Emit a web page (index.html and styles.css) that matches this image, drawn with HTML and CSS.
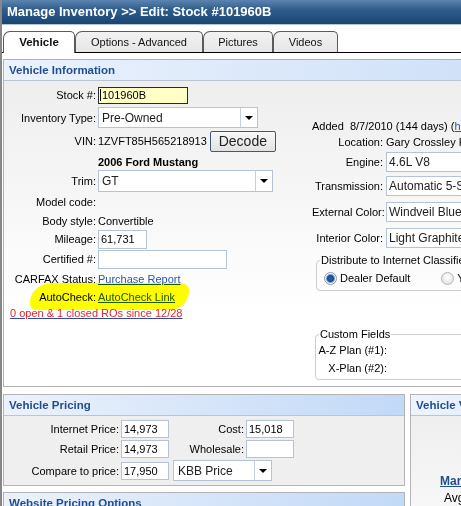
FILE: index.html
```html
<!DOCTYPE html>
<html>
<head>
<meta charset="utf-8">
<title>Manage Inventory</title>
<link rel="stylesheet" href="styles.css">
</head>
<body>
<div class="window">
  <div class="titlebar">Manage Inventory &gt;&gt; Edit: Stock #101960B</div>
  <div class="tabbar">
    <div class="tab tab-vehicle active">Vehicle</div>
    <div class="tab tab-options">Options - Advanced</div>
    <div class="tab tab-pictures">Pictures</div>
    <div class="tab tab-videos">Videos</div>
  </div>
  <div class="content">
    <section class="panel info">
      <div class="panel-head info-head">Vehicle Information</div>
      <div class="info-body">
        <div class="info-left">
          <div class="lbl">Stock #:</div>
          <div class="val"><span class="box stock"><span class="caret"></span>101960B</span></div>

          <div class="lbl">Inventory Type:</div>
          <div class="val"><span class="box select inv-type"><span class="sel-text">Pre-Owned</span><span class="sel-arrow"></span></span></div>

          <div class="lbl">VIN:</div>
          <div class="val"><span>1ZVFT85H565218913</span><span class="btn">Decode</span></div>

          <div class="lbl"></div>
          <div class="val ymm">2006 Ford Mustang</div>

          <div class="lbl">Trim:</div>
          <div class="val"><span class="box select trim"><span class="sel-text">GT</span><span class="sel-arrow"></span></span></div>

          <div class="lbl">Model code:</div>
          <div class="val"></div>

          <div class="lbl">Body style:</div>
          <div class="val">Convertible</div>

          <div class="lbl">Mileage:</div>
          <div class="val"><span class="box mileage">61,731</span></div>

          <div class="lbl">Certified #:</div>
          <div class="val"><span class="box certified"></span></div>

          <div class="lbl">CARFAX Status:</div>
          <div class="val"><a class="link">Purchase Report</a></div>

          <div class="lbl">AutoCheck:</div>
          <div class="val"><a class="link">AutoCheck Link</a></div>

          <div class="ros"><a class="ros-link">0 open &amp; 1 closed ROs since 12/28</a></div>

          <div class="highlight"></div>
        </div>

        <div class="info-right">
          <div class="facts">
            <div class="added">Added&nbsp; 8/7/2010 (144 days) (<a class="link">history</a>)</div>
            <div class="lbl">Location:</div>
            <div class="val">Gary Crossley Ford</div>
            <div class="lbl">Engine:</div>
            <div class="val"><span class="box wide">4.6L V8</span></div>
            <div class="lbl">Transmission:</div>
            <div class="val"><span class="box wide">Automatic 5-Speed</span></div>
            <div class="lbl">External Color:</div>
            <div class="val"><span class="box wide">Windveil Blue Metallic</span></div>
            <div class="lbl">Interior Color:</div>
            <div class="val"><span class="box wide">Light Graphite</span></div>
          </div>

          <fieldset class="group distribute">
            <legend>Distribute to Internet Classifieds</legend>
            <div class="radios">
              <span class="radio checked"></span><span class="radio-label">Dealer Default</span>
              <span class="radio second"></span><span class="radio-label">Yes</span>
            </div>
          </fieldset>

          <fieldset class="group custom">
            <legend>Custom Fields</legend>
            <div class="custom-grid">
              <div class="lbl">A-Z Plan (#1):</div><div class="val"></div>
              <div class="lbl">X-Plan (#2):</div><div class="val"></div>
            </div>
          </fieldset>
        </div>
      </div>
    </section>

    <div class="lower">
      <div class="lower-left">
        <section class="panel pricing">
          <div class="panel-head">Vehicle Pricing</div>
          <div class="pricing-body">
            <div class="lbl">Internet Price:</div>
            <div><span class="box price">14,973</span></div>
            <div class="lbl">Cost:</div>
            <div><span class="box price">15,018</span></div>

            <div class="lbl">Retail Price:</div>
            <div><span class="box price">14,973</span></div>
            <div class="lbl">Wholesale:</div>
            <div><span class="box price"></span></div>

            <div class="lbl">Compare to price:</div>
            <div><span class="box price">17,950</span></div>
            <div class="kbb-cell"><span class="box select kbb"><span class="sel-text">KBB Price</span><span class="sel-arrow"></span></span></div>
          </div>
        </section>
        <section class="panel website">
          <div class="panel-head">Website Pricing Options</div>
        </section>
      </div>
      <section class="panel vvalue">
        <div class="panel-head vvalue-head">Vehicle Values</div>
        <div class="vvalue-body">
          <a class="market">Market Value</a>
          <div class="avg">Avg. Market Price</div>
        </div>
      </section>
    </div>
  </div>
</div>
</body>
</html>
```

FILE: styles.css
```css
html, body {
  margin: 0;
  padding: 0;
  overflow: hidden;
}

body {
  width: 461px;
  height: 506px;
  background: #ffffff;
  font-family: "Liberation Sans", Arial, sans-serif;
  font-size: 11px;
  color: #000;
}

.window {
  box-sizing: border-box;
  height: 506px;
  border-left: 2px solid #878787;
}

/* Title bar */
.titlebar {
  box-sizing: border-box;
  height: 25px;
  padding-left: 5px;
  background: linear-gradient(#5d84b0 0%, #2f5c8c 40%, #184571 100%);
  border-bottom: 1px solid #b9c4cf;
  color: #fff;
  font-weight: bold;
  font-size: 13px;
  line-height: 24px;
  white-space: nowrap;
}

/* Tabs */
.tabbar {
  display: flex;
  align-items: flex-end;
  height: 21px;
  padding: 6px 0 0 1px;
  border-bottom: 1px solid #000;
}

.tab {
  box-sizing: border-box;
  flex-shrink: 0;
  height: 21px;
  border: 1px solid #5a5a5a;
  border-bottom: none;
  border-radius: 7px 5px 0 0;
  background: linear-gradient(#f2f2f2, #e6e6e6);
  color: #111;
  font-size: 11px;
  line-height: 20px;
  text-align: center;
  white-space: nowrap;
}

.tab.active {
  height: 22px;
  margin-bottom: -1px;
  background: #fff;
  font-weight: bold;
  font-size: 11.5px;
  line-height: 21px;
  position: relative;
}

.tab-vehicle { width: 72px; }
.tab-options { width: 128px; }
.tab-pictures { width: 70px; }
.tab-videos { width: 65px; }

/* Content */
.content {
  padding: 6px 0 0 1px;
}

.panel {
  box-sizing: border-box;
  border: 1px solid #b3b3b3;
  background: #fff;
}

.panel-head {
  box-sizing: border-box;
  height: 21px;
  padding-left: 5px;
  background: linear-gradient(to right, #ebf2fc, #c2d9f7);
  border-bottom: 1px solid #b9c5d3;
  color: #1f4e8f;
  font-weight: bold;
  font-size: 11.5px;
  line-height: 20px;
  white-space: nowrap;
}

.info {
  width: 700px;
}

.info-body {
  display: flex;
  height: 305px;
  background: linear-gradient(#eeeeee, #ffffff 230px);
}

.lbl {
  text-align: right;
  white-space: nowrap;
}

.val {
  display: flex;
  align-items: center;
  white-space: nowrap;
}

/* left column */
.info-left {
  position: relative;
  flex-shrink: 0;
  display: grid;
  grid-template-columns: 92px 1fr;
  grid-template-rows: 22px 23px 24px 17px 22px 20px 17px 20px 20px 19px 18px 14px;
  column-gap: 2px;
  align-items: center;
  align-content: start;
  width: 308px;
  padding-top: 3px;
}

.box {
  box-sizing: border-box;
  display: flex;
  align-items: center;
  border: 1px solid #b6c3d2;
  background: #fff;
  padding-left: 2px;
  white-space: nowrap;
  overflow: hidden;
}

.stock {
  width: 90px;
  height: 17px;
  background: #ffffc6;
  border-color: #2a2a2a;
  padding-left: 1px;
}

.caret {
  width: 1px;
  height: 12px;
  margin-right: 1px;
  background: #000;
}

.select {
  position: relative;
  font-size: 12px;
  color: #222;
  padding-left: 3px;
}

.sel-text {
  flex: 1;
}

.sel-arrow {
  box-sizing: border-box;
  align-self: stretch;
  width: 17px;
  border-left: 1px solid #c6cfda;
  position: relative;
}

.sel-arrow::after {
  content: "";
  position: absolute;
  left: 4px;
  top: 50%;
  margin-top: -2px;
  border-left: 4px solid transparent;
  border-right: 4px solid transparent;
  border-top: 4px solid #000;
}

.inv-type {
  width: 160px;
  height: 21px;
}

.trim {
  width: 175px;
  height: 22px;
}

.btn {
  box-sizing: border-box;
  width: 66px;
  height: 21px;
  margin-left: 3px;
  border: 1px solid #38598a;
  border-radius: 2px;
  background: linear-gradient(#f8f8f8, #e2e2e2);
  color: #222;
  font-size: 14px;
  line-height: 19px;
  text-align: center;
}

.ymm {
  font-weight: bold;
}

.mileage {
  width: 49px;
  height: 19px;
}

.certified {
  width: 129px;
  height: 19px;
}

.link {
  color: #2458a6;
  text-decoration: underline;
}

.ros {
  grid-column: 1 / -1;
  padding-left: 6px;
  white-space: nowrap;
}

.ros-link {
  color: #e3252d;
  text-decoration: underline;
  text-decoration-color: #2a4c9c;
}

.highlight {
  position: absolute;
  left: 27px;
  top: 202px;
  width: 157px;
  height: 27px;
  background: #ffff00;
  border-radius: 16px 12px 13px 10px / 14px 12px 13px 12px;
  transform: skewX(-18deg);
  mix-blend-mode: multiply;
  pointer-events: none;
}

/* right column */
.info-right {
  display: flex;
  flex-direction: column;
  flex-shrink: 0;
  width: 300px;
}

.facts {
  display: grid;
  grid-template-columns: 71px 1fr;
  grid-template-rows: 17px 16px 23px 26px 26px 26px;
  column-gap: 3px;
  align-items: center;
  margin-top: 36px;
}

.added {
  grid-column: 1 / -1;
  white-space: nowrap;
}

.wide {
  width: 160px;
  height: 20px;
  font-size: 12px;
  color: #222;
}

.group {
  box-sizing: border-box;
  width: 220px;
  margin: 0;
  border: 1px solid #cdcdcd;
  border-radius: 4px;
  min-inline-size: 0;
}

.group legend {
  padding: 0 1px;
  font-size: 11px;
  line-height: 13px;
  white-space: nowrap;
}

.distribute {
  margin: 3px 0 0 4px;
  padding: 0 0 4px 3px;
}

.radios {
  display: flex;
  align-items: center;
  height: 16px;
  margin-top: 3px;
  white-space: nowrap;
}

.radio {
  box-sizing: border-box;
  width: 13px;
  height: 13px;
  margin-left: 4px;
  border: 1px solid #8d9aa8;
  border-radius: 50%;
  background: radial-gradient(circle at 50% 40%, #ffffff, #dcdcdc);
}

.radio.checked {
  background: radial-gradient(circle at 50% 50%, #2a64ad 0, #1b4d8f 3px, #6f9fd6 4px, #ffffff 5px, #e2e2e2 6px);
}

.radio.second {
  margin-left: 31px;
  border-color: #b5b5b5;
}

.radio-label {
  margin-left: 3px;
}

.custom {
  margin: 37px 0 0 3px;
  padding: 0 0 2px 0;
}

.custom legend {
  margin-left: 3px;
}

.custom-grid {
  display: grid;
  grid-template-columns: 71px 1fr;
  grid-template-rows: 18px 18px;
  align-items: center;
}

/* lower area */
.lower {
  display: flex;
  align-items: flex-start;
  margin-top: 7px;
}

.lower-left {
  flex-shrink: 0;
  width: 402px;
}

.pricing-body {
  display: grid;
  grid-template-columns: 115px 48px 73px 48px;
  grid-template-rows: 20px 20px 23px;
  column-gap: 2px;
  align-items: center;
  padding: 3px 0 3px 0;
  background: #efefef;
}

.price {
  width: 48px;
  height: 18px;
  padding-left: 2px;
}

.kbb-cell {
  grid-column: 3 / span 2;
}

.kbb {
  width: 99px;
  height: 21px;
  margin-left: 2px;
  padding-left: 4px;
}

.website {
  margin-top: 6px;
  height: 40px;
}

.vvalue {
  flex-shrink: 0;
  width: 200px;
  margin-left: 5px;
}

.vvalue-head {
  background: linear-gradient(to right, #eef4fd, #d3e3f9);
}

.vvalue-body {
  height: 120px;
  padding: 57px 0 0 29px;
  background: linear-gradient(#efefef, #ffffff);
  white-space: nowrap;
}

.market {
  display: block;
  color: #1f4e8f;
  font-weight: bold;
  font-size: 12px;
  line-height: 16px;
  text-decoration: underline;
}

.avg {
  margin: 1px 0 0 4px;
  font-size: 12px;
  line-height: 16px;
}
```
